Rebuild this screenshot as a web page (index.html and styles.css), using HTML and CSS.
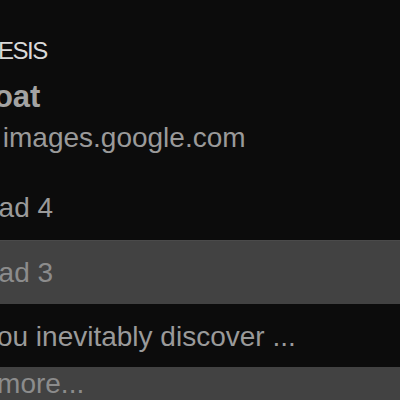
FILE: index.html
```html
<!DOCTYPE html>
<html>
<head>
<meta charset="utf-8">
<link rel="stylesheet" href="styles.css">
</head>
<body>
<div class="page">
  <header class="detail">
    <div class="section">ESIS</div>
    <div class="title">boat</div>
    <div class="source">from images.google.com</div>
  </header>
  <ul class="threads">
    <li class="row"><span class="t t-ad">Thread 4</span></li>
    <li class="row row-selected"><span class="t t-ad">Thread 3</span></li>
    <li class="row row-plain"><span class="t t-you">When you inevitably discover ...</span></li>
    <li class="row row-more"><span class="t t-more">Load more...</span></li>
  </ul>
</div>
</body>
</html>
```
FILE: styles.css
```css
html, body {
  margin: 0;
  padding: 0;
  background: #0c0c0c;
  width: 400px;
  height: 400px;
  overflow: hidden;
}
.page {
  font-family: "Liberation Sans", Arial, Helvetica, sans-serif;
  color: #9a9a9a;
  white-space: nowrap;
  overflow: hidden;
  width: 400px;
  height: 400px;
}
.detail {
  padding-top: 37px;
}
.section {
  font-size: 24px;
  line-height: 28px;
  letter-spacing: -1.5px;
  color: #d9d9d9;
  text-indent: -2px;
}
.title {
  font-size: 31px;
  font-weight: bold;
  line-height: 42px;
  margin-top: 11px;
  color: #a3a3a3;
  text-indent: -25px;
}
.source {
  font-size: 28px;
  line-height: 40px;
  text-indent: -61px;
}
.threads {
  list-style: none;
  margin: 18px 0 0;
  padding: 0;
}
.row {
  height: 64px;
  line-height: 64px;
  font-size: 28px;
  box-sizing: border-box;
}
.row-selected {
  background: #424242;
  color: #8c8c8c;
  border-top: 1px solid #4a4a4a;
  line-height: 63px;
}
.row-plain {
  padding-top: 1px;
  line-height: 63px;
}
.row-more {
  background: #424242;
  color: #8c8c8c;
  line-height: 34px;
  margin-top: -1px;
}
.t { display: block; }
.t-ad { text-indent: -59px; }
.t-you { text-indent: -98px; }
.t-more { text-indent: -73px; }
```
